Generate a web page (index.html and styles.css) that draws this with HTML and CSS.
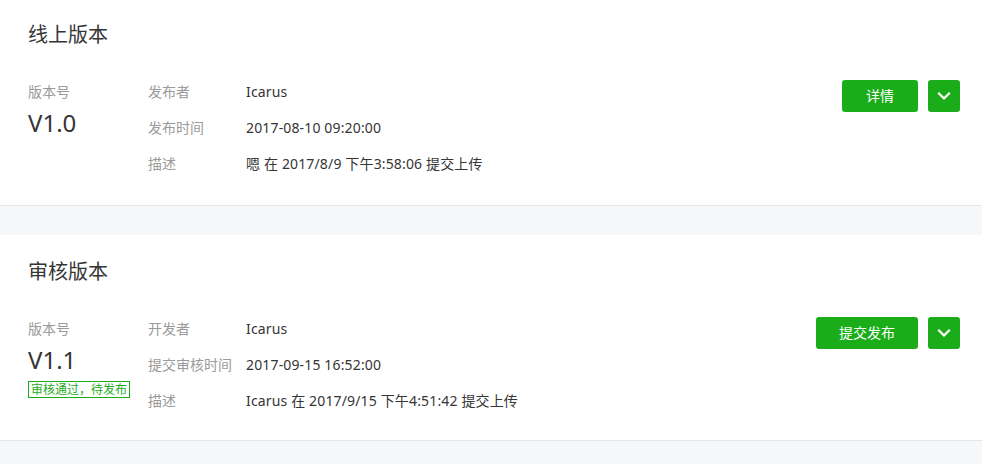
FILE: index.html
```html
<!DOCTYPE html>
<html lang="zh-CN">
<head>
<meta charset="utf-8">
<title>版本管理</title>
<link rel="stylesheet" href="styles.css">
</head>
<body>
<section class="card">
  <h2 class="card-title">线上版本</h2>
  <div class="card-body">
    <div class="version">
      <div class="label">版本号</div>
      <div class="version-num">V1.0</div>
    </div>
    <dl class="info">
      <dt>发布者</dt><dd>Icarus</dd>
      <dt>发布时间</dt><dd>2017-08-10 09:20:00</dd>
      <dt>描述</dt><dd>嗯 在 2017/8/9 下午3:58:06 提交上传</dd>
    </dl>
    <div class="actions">
      <button class="btn">详情</button>
      <button class="btn btn-icon" aria-label="更多">
        <svg width="32" height="32" viewBox="0 0 32 32"><path d="M11 13.5 L16 18.5 L21 13.5" fill="none" stroke="#fff" stroke-width="2.2" stroke-linecap="square"/></svg>
      </button>
    </div>
  </div>
</section>
<section class="card card-review">
  <h2 class="card-title">审核版本</h2>
  <div class="card-body">
    <div class="version">
      <div class="label">版本号</div>
      <div class="version-num">V1.1</div>
      <span class="badge">审核通过，待发布</span>
    </div>
    <dl class="info">
      <dt>开发者</dt><dd>Icarus</dd>
      <dt>提交审核时间</dt><dd>2017-09-15 16:52:00</dd>
      <dt>描述</dt><dd>Icarus 在 2017/9/15 下午4:51:42 提交上传</dd>
    </dl>
    <div class="actions">
      <button class="btn">提交发布</button>
      <button class="btn btn-icon" aria-label="更多">
        <svg width="32" height="32" viewBox="0 0 32 32"><path d="M11 13.5 L16 18.5 L21 13.5" fill="none" stroke="#fff" stroke-width="2.2" stroke-linecap="square"/></svg>
      </button>
    </div>
  </div>
</section>
</body>
</html>
```
FILE: styles.css
```css
* { box-sizing: border-box; }
html, body { margin: 0; padding: 0; }
body {
  background: #f6f7f9;
  font-family: "Noto Sans", "Noto Sans CJK SC", sans-serif;
  color: #353535;
  font-size: 14px;
}
.card {
  background: #fff;
  border-bottom: 1px solid #e5e6ea;
  padding: 20px 22px 29px 28px;
  margin-bottom: 29px;
}
.card-review {
  padding-top: 22px;
  padding-bottom: 27px;
}
.card-title {
  margin: 0;
  font-size: 20px;
  font-weight: normal;
  line-height: 30px;
  color: #353535;
}
.card-body {
  display: flex;
  align-items: flex-start;
  margin-top: 30px;
}
.version {
  width: 120px;
  display: flex;
  flex-direction: column;
  align-items: flex-start;
}
.label {
  color: #9a9a9a;
  line-height: 24px;
}
.version-num {
  font-size: 24px;
  line-height: 38px;
  color: #353535;
}
.badge {
  margin-top: 2px;
  border: 1px solid #1aad19;
  color: #1aad19;
  font-size: 12px;
  line-height: 15px;
  padding: 0 2px;
}
.info {
  margin: 0;
  display: grid;
  grid-template-columns: 98px auto;
  row-gap: 12px;
  line-height: 24px;
}
.info dt { color: #9a9a9a; }
.info dd { margin: 0; color: #353535; letter-spacing: 0.15px; }
.actions {
  margin-left: auto;
  display: flex;
  gap: 10px;
}
.btn {
  height: 32px;
  min-width: 76px;
  padding: 0 23px;
  border: 0;
  border-radius: 3px;
  background: #1aad19;
  color: #fff;
  font-family: inherit;
  font-size: 14px;
  line-height: 32px;
}
.btn-icon {
  width: 32px;
  min-width: 32px;
  padding: 0;
  display: flex;
}
.btn-icon svg { display: block; }
```
